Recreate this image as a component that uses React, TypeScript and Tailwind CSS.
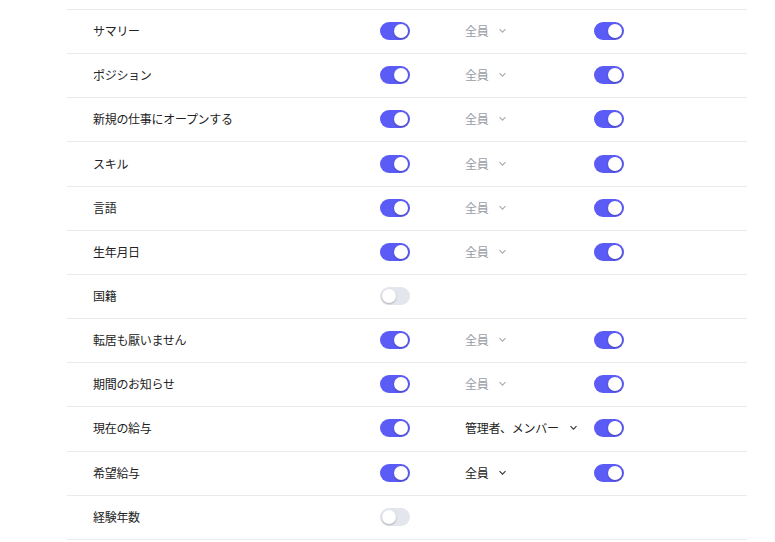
type Row = {
    label: string;
    enabled: boolean;
    visibility?: string;
    active?: boolean;
};

const rows: Row[] = [
    { label: 'サマリー', enabled: true, visibility: '全員' },
    { label: 'ポジション', enabled: true, visibility: '全員' },
    { label: '新規の仕事にオープンする', enabled: true, visibility: '全員' },
    { label: 'スキル', enabled: true, visibility: '全員' },
    { label: '言語', enabled: true, visibility: '全員' },
    { label: '生年月日', enabled: true, visibility: '全員' },
    { label: '国籍', enabled: false },
    { label: '転居も厭いません', enabled: true, visibility: '全員' },
    { label: '期間のお知らせ', enabled: true, visibility: '全員' },
    { label: '現在の給与', enabled: true, visibility: '管理者、メンバー', active: true },
    { label: '希望給与', enabled: true, visibility: '全員', active: true },
    { label: '経験年数', enabled: false },
];

function Toggle({ on }: { on: boolean }) {
    return (
        <div
            className={`w-[30px] h-[18px] rounded-full flex items-center px-[2px] ${on ? 'bg-[#5b5bf6] justify-end' : 'bg-[#e3e6ec] justify-start'}`}
        >
            <div className="w-[14px] h-[14px] rounded-full bg-white shadow-[0_1px_2px_rgba(0,0,0,0.25)]" />
        </div>
    );
}

function Chevron({ dark }: { dark: boolean }) {
    return (
        <svg width="9" height="6" viewBox="0 0 9 6" className={dark ? 'text-[#333]' : 'text-[#a8aab3]'}>
            <polyline points="1.5,1.2 4.5,4.2 7.5,1.2" fill="none" stroke="currentColor" strokeWidth="1.1" />
        </svg>
    );
}

export default function App() {
    return (
        <div className="w-[775px] h-[542px] bg-white overflow-hidden pt-[9px] font-['Noto_Sans_CJK_JP','Noto_Sans',sans-serif]">
            <div className="ml-[67px] w-[680px] border-b border-[#ebebeb]">
                {rows.map((row) => (
                    <div
                        key={row.label}
                        className="h-[44.17px] pb-[1px] border-t border-[#ebebeb] grid grid-cols-[313px_85px_129px_1fr] items-center"
                    >
                        <div className="pl-[26px] text-[12px] text-[#222] tracking-[-0.3px]">{row.label}</div>
                        <div>
                            <Toggle on={row.enabled} />
                        </div>
                        <div>
                            {row.visibility && (
                                <div
                                    className={`flex items-center gap-[10px] text-[12px] tracking-[-0.3px] ${row.active ? 'text-[#222]' : 'text-[#9a9ca6]'}`}
                                >
                                    <span>{row.visibility}</span>
                                    <Chevron dark={!!row.active} />
                                </div>
                            )}
                        </div>
                        <div>{row.visibility && <Toggle on={row.enabled} />}</div>
                    </div>
                ))}
            </div>
        </div>
    );
}
